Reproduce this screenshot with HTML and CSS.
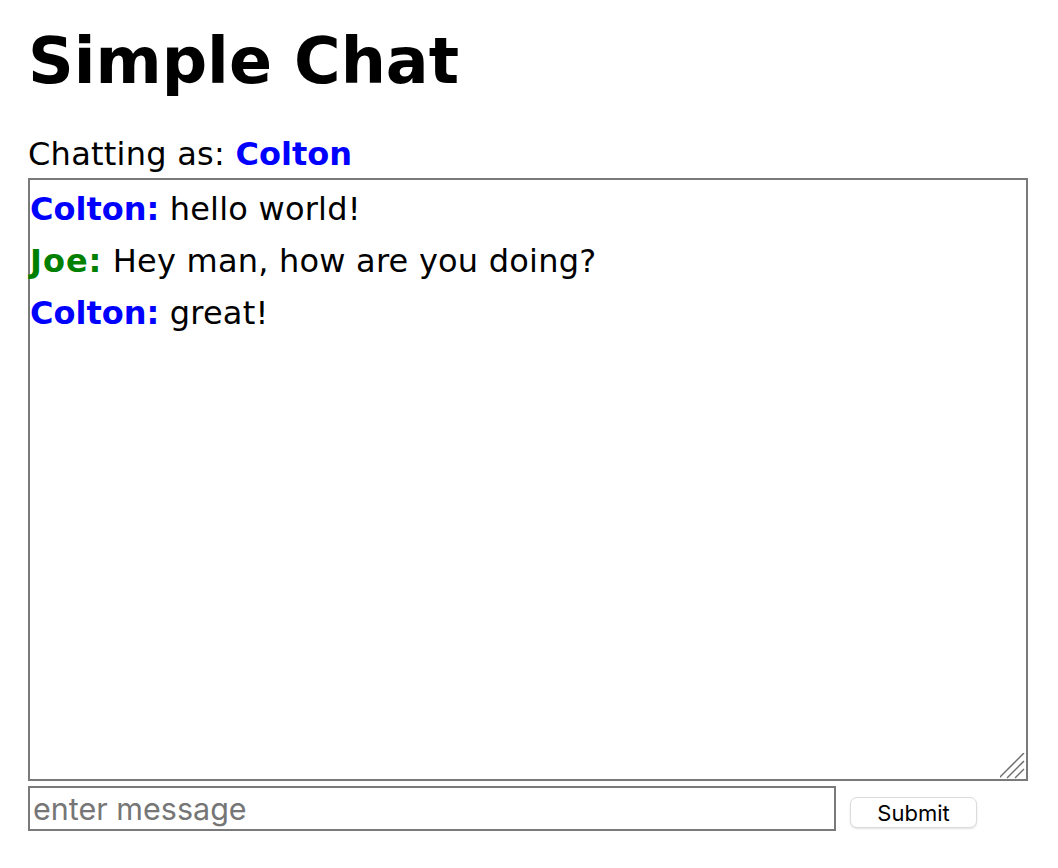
FILE: index.html
```html
<!DOCTYPE html>
<html>
<head>
<meta charset="utf-8">
<title>Simple Chat</title>
<link rel="stylesheet" href="styles.css">
</head>
<body>
<div class="page">
  <h1 class="title">Simple Chat</h1>
  <div class="whoami">Chatting as: <span class="me">Colton</span></div>
  <div class="chatbox">
    <div class="msg"><span class="name blue">Colton:</span> hello world!</div>
    <div class="msg"><span class="name green">Joe:</span> Hey man, how are you doing?</div>
    <div class="msg"><span class="name blue">Colton:</span> great!</div>
    <svg class="grip" width="26" height="26" viewBox="0 0 26 26">
      <line x1="-1" y1="25" x2="24" y2="0" stroke="#6e6e6e" stroke-width="1.5"/>
      <line x1="7" y1="25" x2="24" y2="8" stroke="#6e6e6e" stroke-width="1.5"/>
      <line x1="15" y1="25" x2="24" y2="16" stroke="#6e6e6e" stroke-width="1.5"/>
    </svg>
  </div>
  <form class="composer">
    <input class="field" type="text" placeholder="enter message">
    <button class="submit" type="button">Submit</button>
  </form>
</div>
</body>
</html>
```

FILE: styles.css
```css
html, body {
  margin: 0;
  padding: 0;
  background: #ffffff;
}

.page {
  padding: 24px 30px 0 28px;
  font-family: "DejaVu Sans", Verdana, sans-serif;
  color: #000;
}

.title {
  font-size: 63.5px;
  font-weight: bold;
  line-height: 74px;
  margin: 0 0 38px 0;
}

.whoami {
  font-size: 32px;
  line-height: 37px;
  letter-spacing: 0.25px;
  margin: 0 0 5px 0;
}

.me {
  font-weight: bold;
  color: #0000ff;
  letter-spacing: 0;
}

.chatbox {
  position: relative;
  box-sizing: border-box;
  width: 1000px;
  height: 603px;
  border: 2px solid #7a7a7a;
  padding: 3px 0 0 0;
  font-size: 32px;
}

.msg {
  line-height: 52px;
  white-space: nowrap;
  letter-spacing: 0.22px;
}

.name {
  font-weight: bold;
  letter-spacing: 0;
}

.blue {
  color: #0000ff;
}

.green {
  color: #008000;
  letter-spacing: 1px;
}

.grip {
  position: absolute;
  right: 0;
  bottom: 0;
}

.composer {
  display: flex;
  align-items: flex-start;
  gap: 14px;
  margin: 5px 0 0 0;
}

.field {
  box-sizing: border-box;
  width: 808px;
  height: 45px;
  margin: 0;
  border: 2px solid #7a7a7a;
  border-radius: 0;
  padding: 0 3px;
  font-family: Inter, "Noto Sans", sans-serif;
  font-size: 30.5px;
  color: #000;
  background: #fff;
  outline: none;
}

.field::placeholder {
  color: #767676;
}

.submit {
  box-sizing: border-box;
  width: 127px;
  height: 31px;
  margin: 11px 0 0 0;
  padding: 0;
  border: 1px solid #dcdcdc;
  border-radius: 7px;
  background: #ffffff;
  box-shadow: 0 1px 2px rgba(0, 0, 0, 0.12);
  font-family: Inter, "Noto Sans", sans-serif;
  font-size: 22px;
  color: #000;
}
```
